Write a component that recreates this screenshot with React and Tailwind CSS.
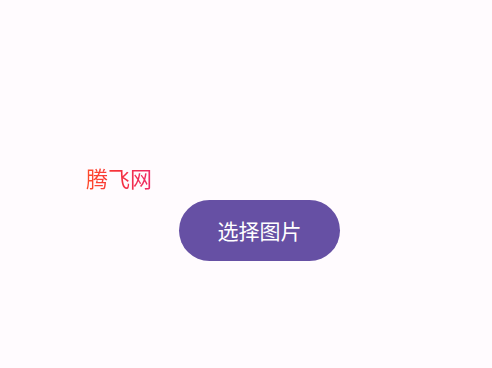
import React from "react";

export default function App() {
  return (
    <div
      className="flex h-[368px] w-full flex-col bg-[#fffbfe]"
      style={{ fontFamily: '"Noto Sans CJK SC", "Noto Sans", sans-serif' }}
    >
      <div className="pl-[86px] pt-[163px] text-[22px] leading-[28px]">
        <span className="bg-gradient-to-r from-[#ff4a2a] via-[#f5303c] to-[#ee2a66] bg-clip-text text-transparent">
          腾飞网
        </span>
      </div>
      <div className="pl-[179px] pt-[9px]">
        <button
          type="button"
          className="flex h-[61px] w-[161px] items-center justify-center rounded-full bg-[#6650a4] text-[21px] leading-none text-white"
        >
          选择图片
        </button>
      </div>
    </div>
  );
}
